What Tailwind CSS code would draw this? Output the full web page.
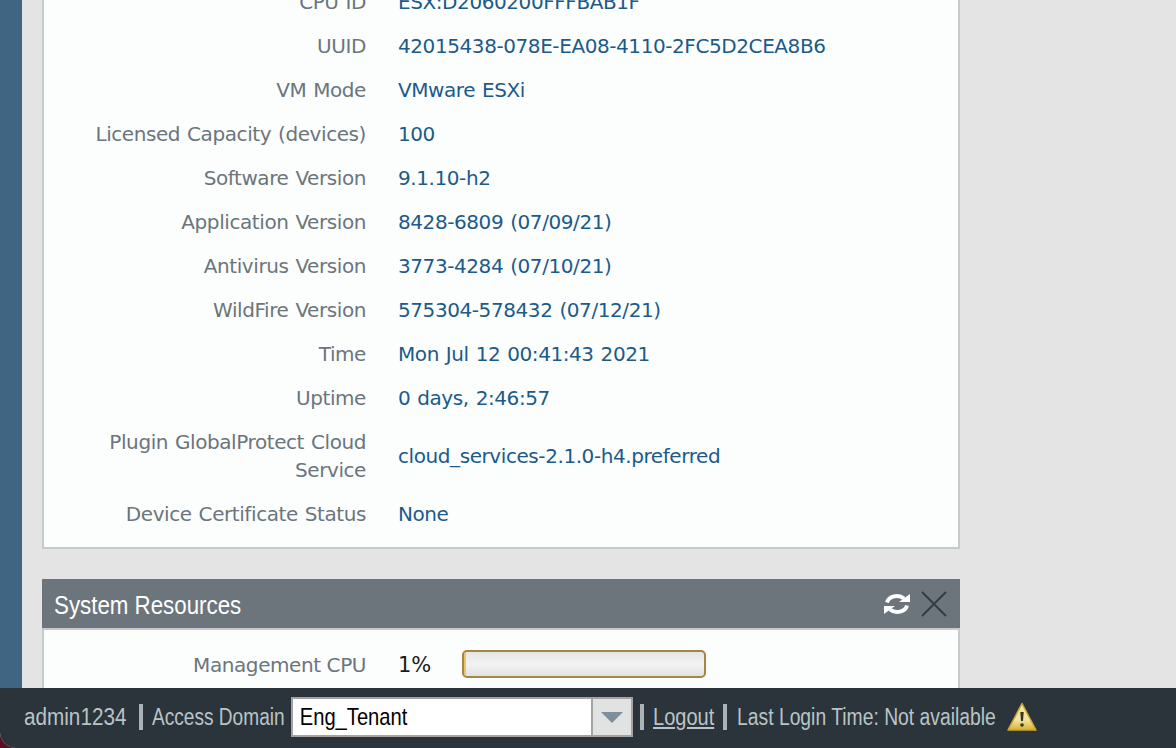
<!DOCTYPE html>
<html lang="en">
  <head>
    <meta charset="UTF-8" />
    <meta name="viewport" content="width=device-width, initial-scale=1.0" />
    <title>Dashboard</title>
    <script src="https://cdn.jsdelivr.net/npm/@tailwindcss/browser@4"></script>
  </head>
  <body class="w-[1176px] h-[748px] overflow-hidden bg-[#5a1020] font-['DejaVu_Sans',sans-serif]">
    <div class="flex flex-col h-[748px] rounded-bl-[16px] overflow-hidden bg-[#e4e4e4]">
      <div class="flex flex-1 min-h-0 overflow-hidden">
        <div class="w-[22px] bg-[#3f6583] shrink-0"></div>
        <div class="flex-1 pl-[20px] -mt-[20px]">
          <div class="w-[918px] bg-[#fbfefd] border-2 border-t-0 border-[#c5cbcb] pb-[11px] text-[20px] leading-[28px] tracking-[-0.42px] [word-spacing:1px]">
            <div class="flex items-center h-[44px]"><div class="w-[322px] text-right text-[#6c757c]">CPU ID</div><div class="ml-[32px] text-[#1c5a8a]">ESX:D2060200FFFBAB1F</div></div>
            <div class="flex items-center h-[44px]"><div class="w-[322px] text-right text-[#6c757c]">UUID</div><div class="ml-[32px] text-[#1c5a8a]">42015438-078E-EA08-4110-2FC5D2CEA8B6</div></div>
            <div class="flex items-center h-[44px]"><div class="w-[322px] text-right text-[#6c757c]">VM Mode</div><div class="ml-[32px] text-[#1c5a8a]">VMware ESXi</div></div>
            <div class="flex items-center h-[44px]"><div class="w-[322px] text-right text-[#6c757c]">Licensed Capacity (devices)</div><div class="ml-[32px] text-[#1c5a8a]">100</div></div>
            <div class="flex items-center h-[44px]"><div class="w-[322px] text-right text-[#6c757c]">Software Version</div><div class="ml-[32px] text-[#1c5a8a]">9.1.10-h2</div></div>
            <div class="flex items-center h-[44px]"><div class="w-[322px] text-right text-[#6c757c]">Application Version</div><div class="ml-[32px] text-[#1c5a8a]">8428-6809 (07/09/21)</div></div>
            <div class="flex items-center h-[44px]"><div class="w-[322px] text-right text-[#6c757c]">Antivirus Version</div><div class="ml-[32px] text-[#1c5a8a]">3773-4284 (07/10/21)</div></div>
            <div class="flex items-center h-[44px]"><div class="w-[322px] text-right text-[#6c757c]">WildFire Version</div><div class="ml-[32px] text-[#1c5a8a]">575304-578432 (07/12/21)</div></div>
            <div class="flex items-center h-[44px]"><div class="w-[322px] text-right text-[#6c757c]">Time</div><div class="ml-[32px] text-[#1c5a8a]">Mon Jul 12 00:41:43 2021</div></div>
            <div class="flex items-center h-[44px]"><div class="w-[322px] text-right text-[#6c757c]">Uptime</div><div class="ml-[32px] text-[#1c5a8a]">0 days, 2:46:57</div></div>
            <div class="flex items-center h-[72px]"><div class="w-[322px] text-right text-[#6c757c]">Plugin GlobalProtect Cloud Service</div><div class="ml-[32px] text-[#1c5a8a]">cloud_services-2.1.0-h4.preferred</div></div>
            <div class="flex items-center h-[44px]"><div class="w-[322px] text-right text-[#6c757c]">Device Certificate Status</div><div class="ml-[32px] text-[#1c5a8a]">None</div></div>
          </div>
          <div class="w-[918px] mt-[30px]">
            <div class="flex items-center justify-between h-[49px] bg-[#6c757c] pl-[12px] pr-[13px]">
              <span class="pt-[3px] w-[187px] whitespace-nowrap origin-left scale-x-[0.858] text-[26px] text-white font-['Liberation_Sans',sans-serif]">System Resources</span>
              <div class="flex items-center gap-[10px]">
                <svg width="28" height="24" viewBox="0 0 28 24" fill="none" stroke="#fff" stroke-width="4">
                  <path d="M4 10.5a10 8 0 0 1 17-4" />
                  <path d="M24 13.5a10 8 0 0 1-17 4" />
                  <path d="M16 10h11V2z" fill="#fff" stroke="none" />
                  <path d="M12 14H1v8z" fill="#fff" stroke="none" />
                </svg>
                <svg width="26" height="26" viewBox="0 0 26 26" stroke="#333d44" stroke-width="2"><path d="M1 1l24 24M25 1L1 25" /></svg>
              </div>
            </div>
            <div class="bg-[#fbfefd] border-2 border-b-0 border-[#c5cbcb] h-[80px] text-[20px] leading-[28px]">
              <div class="flex items-center mt-[21px]">
                <div class="w-[322px] text-right text-[#6c757c] tracking-[-0.42px]">Management CPU</div>
                <div class="ml-[32px] w-[64px] text-[#1a1a1a] text-[21px]">1%</div>
                <div class="-mt-[2px] w-[244px] h-[28px] border-2 border-[#a98545] rounded-[5px] overflow-hidden bg-linear-to-b from-[#e6e6e6] via-[#f2f2f2] to-[#e2e2e2]">
                  <div class="w-[2px] h-full bg-[#e8c56a]"></div>
                </div>
              </div>
            </div>
          </div>
        </div>
      </div>
      <div class="flex items-center h-[60px] shrink-0 bg-[#2b343b] pb-[2px] pl-[24px] text-[#b9c4c6] text-[23px] font-['Liberation_Sans',sans-serif]">
        <span class="w-[103px] whitespace-nowrap origin-left scale-x-[0.9]">admin1234</span>
        <span class="w-[4px] h-[26px] bg-[#a9b3b8] ml-[12px] mr-[9px]"></span>
        <span class="w-[134px] whitespace-nowrap origin-left scale-x-[0.83]">Access Domain</span>
        <div class="flex ml-[5px] h-[40px] w-[342px] border-2 border-[#a3a3a3] bg-white">
          <div class="flex-1 pl-[8px] leading-[36px] text-[24px] text-black whitespace-nowrap origin-left scale-x-[0.84]">Eng_Tenant</div>
          <div class="w-[40px] bg-[#e1e3e3] border-l-2 border-[#a3a3a3] flex items-center justify-center">
            <svg width="22" height="12" viewBox="0 0 22 12"><path d="M0 1h22L11 12z" fill="#7d8f9c" /></svg>
          </div>
        </div>
        <span class="w-[4px] h-[26px] bg-[#a9b3b8] ml-[7px] mr-[9px]"></span>
        <span class="underline w-[61px] origin-left scale-x-[0.87]">Logout</span>
        <span class="w-[4px] h-[26px] bg-[#a9b3b8] ml-[9px] mr-[10px]"></span>
        <span class="w-[259px] whitespace-nowrap origin-left scale-x-[0.84]">Last Login Time: Not available</span>
        <svg class="ml-[11px]" width="30" height="30" viewBox="0 0 30 30">
          <defs>
            <linearGradient id="warnFill" x1="0" y1="0" x2="0" y2="1">
              <stop offset="0" stop-color="#f6e38c" />
              <stop offset="0.6" stop-color="#f1e6a6" />
              <stop offset="1" stop-color="#d9b233" />
            </linearGradient>
          </defs>
          <path d="M15 1.5L29 28H1z" fill="url(#warnFill)" stroke="#c9a52e" stroke-width="1.5" stroke-linejoin="round" />
          <path d="M13.3 10h3.4l-.7 9h-2z" fill="#3a3420" />
          <circle cx="15" cy="23" r="1.8" fill="#3a3420" />
        </svg>
      </div>
    </div>
  </body>
</html>
